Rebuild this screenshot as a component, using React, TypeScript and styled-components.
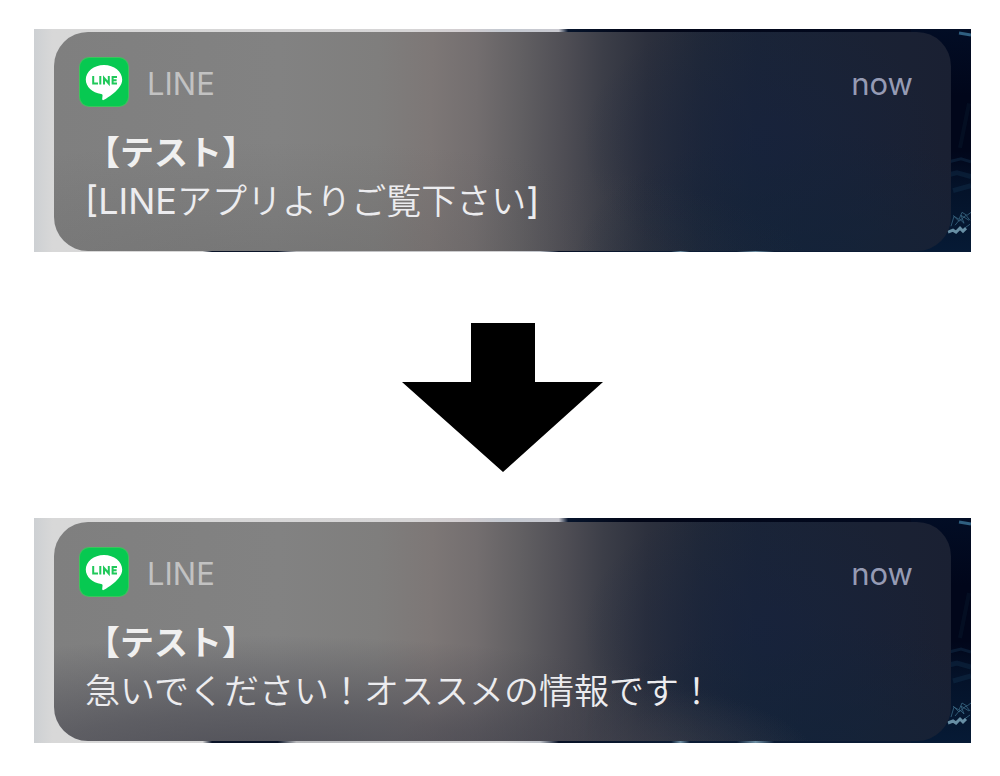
import React from "react";
import styled, { createGlobalStyle } from "styled-components";

const GlobalStyle = createGlobalStyle`
  *, *::before, *::after { box-sizing: border-box; }
  body {
    margin: 0;
    background: #fff;
    font-family: Inter, "Noto Sans CJK JP", sans-serif;
  }
`;

const Page = styled.main`
  display: flex;
  flex-direction: column;
  padding: 29px 29px 33px 34px;
`;

const Strip = styled.section<{ $top: number; $bottom: number }>`
  display: grid;
  grid-template-columns: minmax(0, 1fr);
  overflow: hidden;

  > * { grid-area: 1 / 1; }
  > article { margin: ${(p) => p.$top}px 20px ${(p) => p.$bottom}px; }
`;

const Backdrop = styled.div`
  display: flex;
  background:
    linear-gradient(90deg, transparent 18%, #0a1428 19%, #0a1428 26%, #b9babd 28%, #d0d0d2 50%, #c0c4cb 54%, #071126 56%, #0b1b34 68%, #6d8ea3 69%, #0b1b34 70%, #0b1b34 75%, #6d8ea3 77%, #0b1b34 79%, #0b1b34 100%)
      bottom / 100% 2px no-repeat,
    linear-gradient(90deg, #cdd0d3 0, #d8d8d8 2%, #d6d5d6 40%, #d2cdd0 46%, #c4c9d1 50%, #c9c9d0 56%, #06142c 57%, #020617 64%, #020a20 96%, #010618 100%);
`;

const Texture = styled.svg`
  display: block;
  width: 60px;
  height: 0;
  min-height: 100%;
  margin-left: auto;
`;

const Card = styled.article<{ $dim: boolean }>`
  padding: 25px 38px 26px 25px;
  border-radius: 34px;
  background:
    ${(p) =>
      p.$dim
        ? `radial-gradient(ellipse 62% 62% at 24% 114%, rgba(66, 66, 76, 0.85), rgba(66, 66, 76, 0.55) 45%, transparent),
           radial-gradient(ellipse 24% 34% at 61% 108%, rgba(66, 66, 76, 0.6), transparent),`
        : `radial-gradient(ellipse 60% 60% at 25% 110%, rgba(80, 80, 80, 0.25), transparent),`}
    radial-gradient(ellipse 26% 60% at 84% 105%, rgba(18, 35, 58, 0.8), transparent),
    radial-gradient(ellipse 20% 60% at 79% 50%, rgba(22, 34, 62, 0.6), transparent),
    linear-gradient(91deg, #7f7f7f 0, #828282 25%, #7f7e7d 36%, #7d7776 42%, #736e6f 47%, #615f62 52%, #4e4d54 57%, #3c3e48 61%, #2c303d 66%, #202838 72%, #1a2437 78%, #1a2032 100%);
`;

const Header = styled.header`
  display: flex;
  align-items: flex-start;
  gap: 18px;
  margin-bottom: 18px;
  font-size: 31px;
  line-height: 54px;
`;

const AppIcon = styled.svg`
  flex: none;
  width: 50px;
  height: 50px;
`;

const AppName = styled.span`
  flex: 1;
  font-weight: 400;
  color: #c2c2c2;
`;

const Time = styled.time`
  color: #969bb4;
`;

const Title = styled.h2`
  margin: 0 0 0 7px;
  font-size: 34px;
  font-weight: 700;
  line-height: 48px;
  color: #f0f0f0;
`;

const Message = styled.p`
  margin: 0 0 0 6px;
  font-size: 35px;
  font-weight: 350;
  line-height: 48px;
  color: #ececef;
`;

const Latin = styled.span`
  font-size: 36px;
  font-weight: 400;
  line-height: 1;
`;

const Arrow = styled.svg`
  display: block;
  align-self: center;
  width: 201px;
  height: 149px;
  margin: 71px 0 46px;
`;

const LineIcon = () => (
  <AppIcon viewBox="0 0 50 50" aria-hidden="true">
    <rect width="50" height="50" rx="10" fill="#3fc35d" />
    <rect x="1" y="1" width="48" height="48" rx="9" fill="#07c951" />
    <path
      d="M25 8C14.800 8 6.800 14.500 6.800 22.600c0 7.200 6.500 13.200 15.300 14.400 1.500.3 1.600.9 1.400 2.100l-.3 2.700c0 1.300.7 1.700 1.800 1C30.300 40 36.200 35.500 39.600 31.300c2.400-2.700 3.600-5.700 3.600-8.700C43.200 14.500 35.200 8 25 8z"
      fill="#fff"
    />
    <g fill="none" stroke="#20c85a" strokeWidth="2">
      <path d="M14.200 19v7.500h4.800M21.300 19v8.500M25 27.500v-6.500l4.800 5.500v-7.500M38 20h-4.400v6.500H38M33.600 23.200h4" />
    </g>
  </AppIcon>
);

const Wallpaper = () => (
  <Backdrop aria-hidden="true">
    <Texture viewBox="0 0 60 225" preserveAspectRatio="none">
      <defs>
        <linearGradient id="sea" x1="0" y1="0" x2="0" y2="1">
          <stop offset="0" stopColor="#020d25" />
          <stop offset=".3" stopColor="#01061a" />
          <stop offset=".55" stopColor="#01061a" />
          <stop offset=".7" stopColor="#041229" />
          <stop offset="1" stopColor="#061a35" />
        </linearGradient>
      </defs>
      <rect width="60" height="225" fill="url(#sea)" />
      <g fill="none" stroke="#1d4766">
        <path d="M48 4l6 1 6 1" stroke="#2f5f80" strokeWidth="3" />
        <path d="M38 134l12-3 10 3" opacity=".3" strokeWidth="3" />
        <path d="M38 147l8-2 14 4M42 163l18-5" opacity=".25" strokeWidth="5" />
        <path d="M58 75l-9 45" opacity=".12" strokeWidth="4" />
        <path d="M40 199l3-10 5 3 3-7 5 3 4-3M44 198l5-6 4 4-3-8 8 5M42 188l6 6 7-6 4 5M52 202l7-5" stroke="#3a6883" opacity=".8" strokeWidth="1" />
        <path d="M37 205l5-2 3 2 4-4 3 3 3-3" stroke="#79a3b8" strokeWidth="3" opacity=".85" />
      </g>
    </Texture>
  </Backdrop>
);

interface NotificationProps {
  title: string;
  message: React.ReactNode;
  top: number;
  bottom: number;
  dim?: boolean;
}

const Notification = ({ title, message, top, bottom, dim = false }: NotificationProps) => (
  <Strip $top={top} $bottom={bottom}>
    <Wallpaper />
    <Card $dim={dim}>
      <Header>
        <LineIcon />
        <AppName>LINE</AppName>
        <Time>now</Time>
      </Header>
      <Title>{title}</Title>
      <Message>{message}</Message>
    </Card>
  </Strip>
);

export default function App() {
  return (
    <>
      <GlobalStyle />
      <Page lang="ja">
        <Notification
          title="【テスト】"
          message={
            <>
              <Latin>[LINE</Latin>アプリよりご覧下さい<Latin>]</Latin>
            </>
          }
          top={3}
          bottom={1}
        />
        <Arrow viewBox="0 0 201 149" aria-hidden="true">
          <path d="M69 0h64v59h68L101 149 0 59h69z" />
        </Arrow>
        <Notification
          title="【テスト】"
          message="急いでください！オススメの情報です！"
          top={4}
          bottom={2}
          dim
        />
      </Page>
    </>
  );
}
